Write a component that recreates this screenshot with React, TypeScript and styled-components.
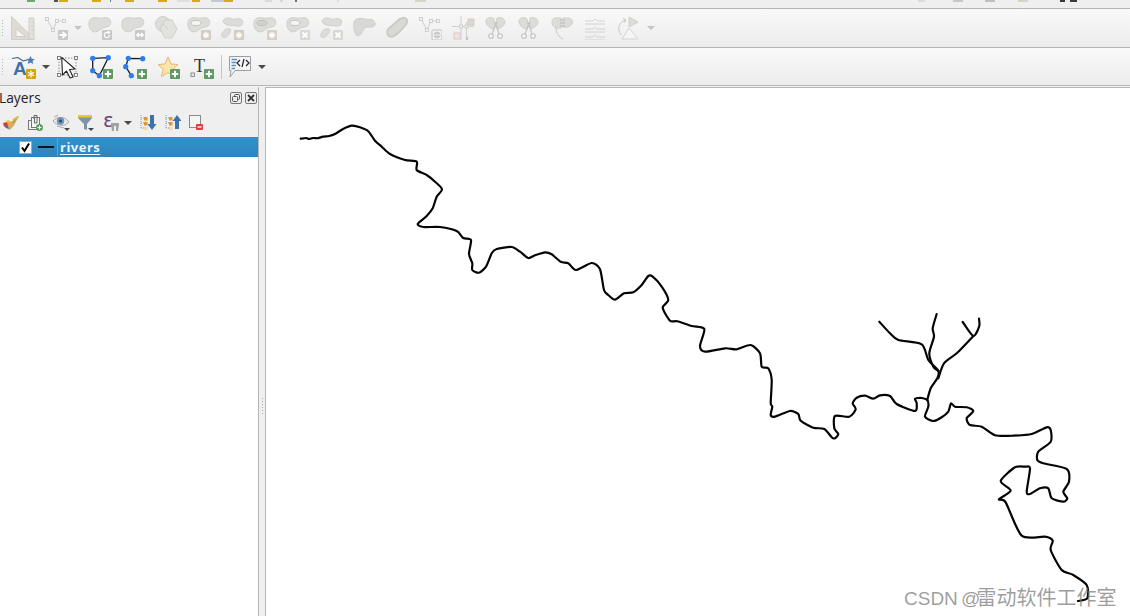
import React from "react";
import styled, { createGlobalStyle } from "styled-components";

const Global = createGlobalStyle`
  html, body { margin: 0; padding: 0; height: 100%; overflow: hidden; background: #efefef; }
  #root { height: 100%; }
  * { box-sizing: border-box; }
`;

const Page = styled.div`
  position: relative;
  width: 1130px;
  height: 616px;
  display: flex;
  flex-direction: column;
  overflow: hidden;
  font-family: "Open Sans", "Noto Sans", sans-serif;
  background: #efefef;
`;

const TopStrip = styled.div`
  height: 9px;
  flex: none;
  display: flex;
  align-items: flex-start;
  background: #efefef;
  border-bottom: 1px solid #b5b5b5;
`;

const Sliver = styled.span<{ $gap: number; $w: number; $c: string }>`
  flex: none;
  height: 2px;
  margin-left: ${(p) => p.$gap}px;
  width: ${(p) => p.$w}px;
  background: ${(p) => p.$c};
`;

const Toolbar = styled.div<{ $h: number }>`
  height: ${(p) => p.$h}px;
  flex: none;
  display: flex;
  align-items: center;
  background: linear-gradient(#f9f9f9, #ececec);
  border-bottom: 1px solid #b5b5b5;
`;

const Grip = styled.span`
  flex: none;
  width: 1px;
  height: 16px;
  margin: 0 3.5px 0 2px;
  background: repeating-linear-gradient(#b9b9b9 0 1px, transparent 1px 3px);
`;

const ToolCell = styled.span<{ $w: number }>`
  flex: none;
  width: ${(p) => p.$w}px;
  display: flex;
  align-items: center;
  justify-content: center;
  svg {
    flex: none;
  }
`;

const Caret = styled.span<{ $off?: boolean; $w?: number }>`
  flex: none;
  width: ${(p) => p.$w ?? 11}px;
  display: flex;
  justify-content: center;
  &::before {
    content: "";
    border-left: 4px solid transparent;
    border-right: 4px solid transparent;
    border-top: 4px solid ${(p) => (p.$off ? "#c4c4c4" : "#4a4a4a")};
  }
`;

const ToolSep = styled.span`
  flex: none;
  width: 1px;
  height: 24px;
  margin: 0 2.5px 0 2px;
  background: #c6c6c6;
`;

const Gap = styled.span<{ $w: number }>`
  flex: none;
  width: ${(p) => p.$w}px;
`;

const Band = styled.div`
  height: 1px;
  flex: none;
  background: #f4f4f4;
`;

const Main = styled.div`
  flex: 1;
  min-height: 0;
  display: flex;
`;

const LayersPanel = styled.section`
  width: 258px;
  flex: none;
  display: flex;
  flex-direction: column;
  background: #efefef;
`;

const PanelHead = styled.header`
  height: 21px;
  flex: none;
  display: flex;
  align-items: center;
  gap: 3px;
  padding-right: 1px;
`;

const PanelTitle = styled.h2`
  flex: 1;
  margin: 0 0 0 -1px;
  font-size: 13.8px;
  font-weight: 400;
  color: #222;
`;

const PanelTools = styled.div`
  height: 29px;
  flex: none;
  display: flex;
  align-items: center;
`;

const Tree = styled.div`
  flex: 1;
  background: #fff;
`;

const LayerRow = styled.div`
  height: 20px;
  display: flex;
  align-items: center;
  padding-left: 19px;
  background: linear-gradient(#3291ca, #2c85bf);
`;

const Check = styled.span`
  flex: none;
  width: 13px;
  height: 13px;
  display: flex;
  align-items: center;
  justify-content: center;
  background: #fff;
  border: 1px solid #a8a8a8;
`;

const Swatch = styled.span`
  flex: none;
  width: 16px;
  height: 2px;
  margin: 0 3px 0 6px;
  background: #10151a;
`;

const LayerName = styled.span`
  padding: 0 0 0 2px;
  border-left: 1px solid #5aa6d6;
  font-size: 13px;
  line-height: 18px;
  font-weight: 700;
  letter-spacing: 0.5px;
  color: #eaf4fb;
  text-decoration: underline;
  text-underline-offset: 2px;
`;

const Splitter = styled.div`
  width: 8px;
  flex: none;
  display: flex;
  justify-content: center;
  padding-top: 311px;
  background: #efefef;
  border-left: 1px solid #b5b5b5;
  border-right: 1px solid #b5b5b5;
`;

const SplitDots = styled.span`
  width: 1px;
  height: 16px;
  margin-left: 1px;
  background: repeating-linear-gradient(#a9a9a9 0 1px, transparent 1px 3px);
`;

const MapCanvas = styled.main`
  flex: 1;
  min-width: 0;
  background: #fff;
  border-top: 1px solid #b5b5b5;
`;

const MapSvg = styled.svg`
  display: block;
  width: 100%;
  height: 100%;
`;

const Watermark = styled.div`
  position: absolute;
  left: 904px;
  top: 586px;
  font-family: "Liberation Sans", "Noto Sans CJK SC", sans-serif;
  font-size: 19px;
  line-height: 24px;
  word-spacing: -2px;
  white-space: nowrap;
  color: rgba(120, 120, 120, 0.72);
`;

const WatermarkCjk = styled.span`
  margin-left: -4px;
  font-size: 20px;
`;

const Ico = ({ s = 24, children }: { s?: number; children: React.ReactNode }) => (
  <svg width={s} height={s} viewBox={`0 0 ${s} ${s}`} fill="none">
    {children}
  </svg>
);

const OFF = { fill: "#dcdcd9", stroke: "#cfcfcb" };
const BLOB = "M1 7C1 2 6 1 10 2C14 3 17 1 20 2C24 4 23 9 21 10C18 12 15 11 13 13C10 16 5 17 3 14C1 12 1 10 1 7Z";

const Blob = () => <path d={BLOB} fill={OFF.fill} stroke={OFF.stroke} />;
const Hole = () => <ellipse cx="9" cy="7" rx="5" ry="2.6" fill="#f5f5f5" stroke="#c4c4c0" />;
const TwoBlobs = () => (
  <>
    <path d="M3 5C4 2 9 1 12 3C15 4 19 1 22 4C24 7 22 11 17 10C13 9 5 11 3 5Z" fill={OFF.fill} stroke={OFF.stroke} />
    <path d="M2 18C3 14 7 12 10 13C12 14 9 19 6 21C3 22 1 21 2 18Z" fill={OFF.fill} stroke={OFF.stroke} />
  </>
);

const Badge = ({ kind, fill = "#c8c8c6" }: { kind: string; fill?: string }) => (
  <g>
    <rect x="14" y="14" width="10" height="10" rx="1" fill={fill} />
    {kind === "plus" && <path d="M19 15.8V22.2M15.8 19H22.2" stroke="#fff" strokeWidth="2" />}
    {kind === "x" && <path d="M16.5 16.5L21.5 21.5M21.5 16.5L16.5 21.5" stroke="#fff" strokeWidth="1.8" />}
    {kind === "arrow" && <path d="M15.5 19H20M18.5 16L22 19L18.5 22" stroke="#fff" strokeWidth="1.8" />}
    {kind === "swap" && <path d="M16 19H22M17.8 17L15.8 19L17.8 21M20.2 17L22.2 19L20.2 21" stroke="#fff" strokeWidth="1.4" />}
    {kind === "rotate" && <path d="M21.5 19A2.6 2.6 0 1 1 19 16.4H21M20 15L21.6 16.4L20 17.8" stroke="#fff" strokeWidth="1.2" />}
    {kind === "gear" && (
      <>
        <circle cx="19" cy="19" r="2" stroke="#fff" strokeWidth="1.2" />
        <path d="M19 15.6V22.4M15.6 19H22.4M16.6 16.6L21.4 21.4M21.4 16.6L16.6 21.4" stroke="#fff" strokeWidth="0.8" />
      </>
    )}
    {kind === "star" && (
      <path d="M19 15.6V22.4M16 17.3L22 20.7M22 17.3L16 20.7" stroke="#fff" strokeWidth="1.2" />
    )}
  </g>
);

const VNodes = () => (
  <g>
    <path d="M3 3L9 14L13 5H20" stroke="#d4d4d0" strokeWidth="1.2" />
    {[[3, 3], [9, 14], [13, 5], [20, 5]].map(([x, y]) => (
      <rect key={`${x}${y}`} x={x - 1.5} y={y - 1.5} width="3" height="3" fill="#f4f4f4" stroke="#c6c6c2" strokeWidth="0.8" />
    ))}
  </g>
);

const Leaves = () => (
  <g>
    <path d="M2 5C2 2 6 1 9 2C11 3 11 9 10 13C6 13 2 9 2 5Z" fill={OFF.fill} stroke={OFF.stroke} />
    <path d="M13 2C16 1 21 2 21 6C21 9 17 12 14 13C13 9 12 5 13 2Z" fill={OFF.fill} stroke={OFF.stroke} />
  </g>
);

const Scissors = () => (
  <g stroke="#c4c0c0" strokeWidth="1.1">
    <path d="M13 6L8 18M11 6L15 18" />
    <circle cx="7" cy="20" r="2.3" fill="#f4f4f4" />
    <circle cx="16" cy="20" r="2.3" fill="#f4f4f4" />
  </g>
);

const disabledIcons: React.ReactNode[] = [
  <g key="a" stroke="#cfcdc6">
    <path d="M0.5 0.5L23.5 23.5H0.5Z" fill="#dedbd5" />
    <path d="M5 12.5L14.5 20.5H5Z" fill="#f4f4f4" />
    <path d="M18 23V2L23 2V23Z" fill="#e4e2dc" />
    <path d="M20 6H23M20 10H23M20 14H23M20 18H23" strokeWidth="0.8" />
  </g>,
  <g key="b"><VNodes /><Badge kind="arrow" /></g>,
  <g key="c"><Blob /><Badge kind="rotate" /></g>,
  <g key="d"><Blob /><Badge kind="swap" /></g>,
  <g key="e">
    <circle cx="9" cy="8" r="7.5" fill={OFF.fill} stroke={OFF.stroke} />
    <path d="M11 4H18L23 13L18 22H11L6 13Z" fill="#e2e2df" stroke={OFF.stroke} />
    <path d="M9 8L14 13" stroke="#c2c2be" strokeDasharray="1.5 1" />
  </g>,
  <g key="f"><Blob /><Hole /><Badge kind="gear" fill="#d0ccc4" /></g>,
  <g key="g"><TwoBlobs /><Badge kind="gear" fill="#d0ccc4" /></g>,
  <g key="h"><Blob /><ellipse cx="9" cy="7" rx="5" ry="2.6" fill="#d2d2ce" stroke="#c0c0bc" /><Badge kind="gear" fill="#d4d0c8" /></g>,
  <g key="i"><Blob /><Hole /><Badge kind="x" fill="#dad8d4" /></g>,
  <g key="j"><TwoBlobs /><Badge kind="x" fill="#dad8d4" /></g>,
  <g key="k">
    <path d="M2 6C3 2 9 2 13 3C16 4 22 2 23 7C24 12 18 11 15 11C11 11 10 20 6 20C3 20 1 12 2 6Z" fill="#d8d9d4" stroke={OFF.stroke} />
  </g>,
  <g key="l">
    <path d="M2 16C2 12 7 10 10 7C13 4 16 1 20 2C23 3 23 7 20 10C17 13 13 18 9 20C5 22 2 20 2 16Z" fill="#d8d9d4" stroke="#c8c9c2" strokeWidth="1.6" />
  </g>,
  <g key="m">
    <VNodes />
    <rect x="14" y="14" width="10" height="10" rx="1" fill="#f4f4f4" stroke="#c0c0c0" />
    <circle cx="19" cy="19" r="3" fill="#c8c8c8" stroke="#c8c8c8" />
    <path d="M16 19H22" stroke="#f4f4f4" />
  </g>,
  <g key="n" stroke="#cfcfcb">
    <path d="M10 0V24M15.5 6V24M1 10.5H23" />
    <rect x="8.5" y="9" width="3" height="3" fill="#f4f4f4" />
    <rect x="14" y="9" width="3" height="3" fill="#f4f4f4" />
    <rect x="15" y="21" width="2" height="3" fill="#c0c0c0" stroke="none" />
    <rect x="17" y="3" width="6" height="6" fill="#dcd8c8" />
    <rect x="3" y="17" width="6" height="6" fill="#efe4e4" stroke="#dcc8c8" />
  </g>,
  <g key="o"><Leaves /><Scissors /></g>,
  <g key="p"><Leaves /><Scissors /></g>,
  <g key="q">
    <path d="M2 6C2 3 5 1 9 2L11 2V12C7 13 2 11 2 6Z" fill={OFF.fill} stroke={OFF.stroke} />
    <path d="M13 2H18C22 2 23 5 22 8C20 11 16 12 13 11Z" fill={OFF.fill} stroke={OFF.stroke} />
    <path d="M10 4L15 4M10 7H15M10 10H15" stroke="#b8b8b4" />
    <path d="M6 12C6 17 9 21 13 23" stroke="#c4c4c0" />
  </g>,
  <g key="r" stroke="#d2d2ce">
    {[3, 11, 19].map((y) => (
      <g key={y}>
        <path d={`M2 ${y + 2}H10C10 ${y} 14 ${y} 14 ${y + 2}H22`} />
        <path d={`M2 ${y + 5}H22`} />
      </g>
    ))}
  </g>,
  <g key="s">
    <path d="M13 1V11L22 6Z" fill="#dcdcd8" stroke="#d0d0cc" />
    <path d="M13 12L6 23H22Z" fill="#f5f5f5" stroke="#d4d4d0" />
    <path d="M10 4C4 5 0 12 5 19" stroke="#c8c8c4" />
    <path d="M7 2L10 4L8 7" stroke="#c8c8c4" />
  </g>,
];

const Dot = ({ x, y, c = "#2f7ee8" }: { x: number; y: number; c?: string }) => <circle cx={x} cy={y} r="2.6" fill={c} />;
const GREEN = "#5e9a62";

const LabelIcon = () => (
  <Ico>
    <path d="M0 3.5L6 2.5L11 6L15 5" stroke="#3d5f8c" strokeWidth="1.1" />
    <path d="M18.5 1L19.8 3.7L22.8 4L20.6 6L21.2 8.9L18.5 7.5L15.8 8.9L16.4 6L14.2 4L17.2 3.7Z" fill="#4f7cb4" />
    <text x="1" y="20" fontFamily="Liberation Sans, sans-serif" fontWeight="700" fontSize="19" fill="#3f6fa8">A</text>
    <Badge kind="star" fill="#d8a400" />
  </Ico>
);

const PointerIcon = () => (
  <Ico>
    <rect x="4" y="3" width="17" height="17" stroke="#8a8a8a" strokeDasharray="1.5 1.5" />
    {[[4, 3], [21, 3], [4, 20], [21, 20]].map(([x, y]) => (
      <rect key={`${x}${y}`} x={x - 1.5} y={y - 1.5} width="3" height="3" fill="#f4f4f4" stroke="#666" strokeWidth="0.8" />
    ))}
    <path d="M6.7 2.3L20 14L14.5 14.5L18 22L15 23L11.5 16L7.5 20Z" fill="#fff" stroke="#222" strokeWidth="1.1" strokeLinejoin="round" />
  </Ico>
);

const PolygonIcon = () => (
  <Ico>
    <path d="M3.7 3.3L19.3 2.7L10.3 20.7L3.7 15.7Z" stroke="#1c1c1c" strokeWidth="1.3" />
    <Dot x={3.7} y={3.3} />
    <Dot x={19.3} y={2.7} />
    <Dot x={3.7} y={15.7} />
    <Dot x={10.3} y={20.7} />
    <Badge kind="plus" fill={GREEN} />
  </Ico>
);

const LineIcon = () => (
  <Ico>
    <path d="M19.7 3.7L5.3 3.3L2.7 11.7L8.3 20.7" stroke="#1c1c1c" strokeWidth="1.3" />
    <Dot x={19.7} y={3.7} />
    <Dot x={5.3} y={3.3} />
    <Dot x={2.7} y={11.7} />
    <Dot x={8.3} y={20.7} />
    <Badge kind="plus" fill={GREEN} />
  </Ico>
);

const StarIcon = () => (
  <Ico>
    <path d="M12 2L15 9L22 9.5L16.8 14.2L18.5 21.5L12 17.5L5.5 21.5L7.2 14.2L2 9.5L9 9Z" fill="#fde5a6" stroke="#e6b676" strokeLinejoin="round" />
    <Badge kind="plus" fill={GREEN} />
  </Ico>
);

const TextIcon = () => (
  <Ico>
    <text x="4" y="17" fontFamily="Liberation Serif, serif" fontSize="18" fill="#333">T</text>
    <rect x="1" y="18" width="3.4" height="3.4" fill="#efefef" stroke="#8a8a8a" />
    <Badge kind="plus" fill={GREEN} />
  </Ico>
);

const BubbleIcon = () => (
  <Ico>
    <path d="M2.5 1.5H23.5V15.5H8L3 22L4 15.5H2.5Z" fill="#f6f6f6" stroke="#9a9ea2" />
    <path d="M4.5 4.5H10M4.5 7.5H9M4.5 10.5H9M4.5 13.5H8" stroke="#5c8fc8" strokeWidth="1.4" />
    <path d="M13 5L10 8L13 11M19 5L22 8L19 11M17 4L15 12" stroke="#222" strokeWidth="1.2" />
  </Ico>
);

const FloatBtn = () => (
  <Ico s={12}>
    <rect x="0.5" y="0.5" width="11" height="11" rx="1.5" fill="#efefef" stroke="#777" />
    <rect x="4.5" y="2.5" width="5" height="5" rx="1" stroke="#555" />
    <rect x="2.5" y="4.5" width="5" height="5" rx="1" fill="#efefef" stroke="#555" />
  </Ico>
);

const CloseBtn = () => (
  <Ico s={12}>
    <rect x="0.5" y="0.5" width="11" height="11" rx="1.5" fill="#efefef" stroke="#777" />
    <path d="M3 3L9 9M9 3L3 9" stroke="#333" strokeWidth="1.8" />
  </Ico>
);

const PaintIcon = () => (
  <Ico s={18}>
    <path d="M17 2L9 8L12 11Z" fill="#c8a050" />
    <path d="M16.5 2.5L11 6" stroke="#e0b840" strokeWidth="2" />
    <path d="M9 7L12.5 11L8 16L3 13L1 11Z" fill="#d8ad60" />
    <path d="M1 9L5 8L6 12L2 12Z" fill="#d83a3a" />
    <path d="M2 12L6 12L7 15L4 14Z" fill="#4a6ea8" />
    <path d="M4 7L7 6L8 9L5 9Z" fill="#e8c030" />
  </Ico>
);

const AddGroupIcon = () => (
  <Ico s={18}>
    <rect x="2.5" y="6.5" width="10" height="9" fill="#f4f4f4" stroke="#777" />
    <rect x="5.5" y="3.5" width="8" height="10" fill="#f4f4f4" stroke="#777" />
    <path d="M8 5V1.5H11V9H8.5V4" stroke="#666" />
    <circle cx="13.5" cy="13.5" r="3.5" fill="#5e9a62" />
    <path d="M13.5 11.5V15.5M11.5 13.5H15.5" stroke="#fff" />
  </Ico>
);

const EyeIcon = () => (
  <Ico s={18}>
    <path d="M1 7C5 2 13 2 17 8C13 13 5 12 1 7Z" fill="#e8e8e8" stroke="#aaa" />
    <circle cx="8.5" cy="7" r="3.7" fill="#6f95b8" />
    <circle cx="8.5" cy="7" r="1.5" fill="#2e4a64" />
    <path d="M2 3L6 1M5 12L12 14" stroke="#aaa" />
    <path d="M12 14H18L15 17Z" fill="#444" />
  </Ico>
);

const FunnelIcon = () => (
  <Ico s={18}>
    <path d="M1 1H15V4L10 10V16L7 15V10L1 4Z" fill="#7d93a8" />
    <path d="M1 1H15V3.5H1Z" fill="#e8c92e" />
    <path d="M11 14H17L14 17Z" fill="#444" />
  </Ico>
);

const ExprIcon = () => (
  <Ico s={28}>
    <text x="6" y="18" fontFamily="DejaVu Sans, sans-serif" fontSize="20" fill="#6b4a78">ε</text>
    <path d="M14 14H22V16L21 22H19V17H17V22H15L14 16Z" fill="#a2a2a2" />
  </Ico>
);

const TreeArrow = ({ up }: { up?: boolean }) => (
  <Ico s={18}>
    <path d="M2 1V15M2 4H6M2 9H6M2 14H6" stroke="#999" strokeDasharray="1 1" />
    <rect x="5" y="3" width="3.5" height="3.5" fill="#e8962a" />
    <rect x="5" y="8" width="3.5" height="3.5" fill="#e8962a" />
    <rect x="5" y="13" width="3.5" height="3" fill="#f0d8b0" />
    <path
      d={up ? "M13 1L17.5 7H15V15H11V7H8.5Z" : "M11 1H15V10H17.5L13 16L8.5 10H11Z"}
      fill="#3d73ad"
    />
  </Ico>
);

const RemoveIcon = () => (
  <Ico s={18}>
    <rect x="1.5" y="1.5" width="11" height="12" stroke="#8a8a8a" fill="#f4f4f4" />
    <rect x="8" y="10" width="7" height="6" rx="1" fill="#e23b45" />
    <path d="M9.5 13H13.5" stroke="#fff" strokeWidth="1.4" />
  </Ico>
);

const slivers: [number, number, string][] = [
  [27, 8, "#6fa574"], [19, 4, "#55504a"], [1, 9, "#d8ab10"], [24, 9, "#d8ab10"], [9, 1, "#5c86b0"],
  [14, 9, "#d8ab10"], [24, 9, "#d8ab10"], [10, 13, "#dedede"], [2, 8, "#d8ab10"], [11, 13, "#c2c9d4"],
  [0, 9, "#d8ab10"], [32, 7, "#dadada"], [8, 3, "#d6d6d6"], [12, 2, "#77706a"], [40, 2, "#dcdcdc"],
  [76, 11, "#d6d4c8"], [492, 7, "#dcdcdc"], [28, 10, "#c8c8c8"], [22, 10, "#c0c0c0"], [23, 10, "#d6d4c8"],
  [32, 5, "#3a3a3a"], [5, 7, "#3a3a3a"],
];

type P = [number, number];

const mainRiver: P[] = [
  [300.7,138.7],[306,138],[309,139],[313,138],[318,138.2],[323,136.7],[329,136],[335,134],[343,129],[351.7,125.7],[360,127.3],[368,131],[375,140.7],[381.7,146.7],
  [390,154],[405,160],[416.7,161.7],[416.7,170],[426.7,175],[435,181.7],[442,189.3],[436.7,196.7],[432.7,208.3],[426.7,216],
  [417.7,224],[423.3,227],[440,227],[456.7,231],[463.3,238],[471,240],[469,254],[472.3,263.3],[472.3,270],[479,272.7],
  [486,266.7],[491.7,253.3],[496.7,249],[511.7,247],[520,251.7],[528.3,258],[535,255.3],[545,252.3],[551.7,254.3],[560.7,261.7],
  [568.3,263.3],[576,270],[591.7,263],[600,269.3],[604,290],[608.3,295],[615,299.7],[624,293.3],[633.3,292.3],[641.7,285],
  [648.3,276],[652.7,276.7],[661.7,286.7],[668.3,300],[662.7,307.7],[670,320.7],[677.3,321.3],[691.7,326],[704.3,329],[700,346],
  [705,351.7],[725,348.3],[736.7,349.3],[750.7,345],[760,353.3],[761.7,366.7],[768.3,368.3],[771.7,380],[770.7,403.3],[772.3,406.7],
  [770.7,415],[775,416.7],[790,411],[798.3,414],[800.7,420.7],[813.3,427.7],[824.3,429],[831.7,437.3],[835,438.3],[838.3,434],
  [834.3,428.3],[835,416],[849.3,416.7],[855.7,409.3],[852.7,403.3],[856.7,397.7],[865,395.7],[873.3,398.7],[880,395.3],[890,396],
  [896.7,404],[915,411],[916.7,403.3],[915,398.7],[921.7,398],[927.3,400],[928.3,406.7],[925,416.7],[933.3,421],[941.7,417.3],
  [948.3,411.7],[951,403.3],[955,406.7],[966.7,407.3],[973.3,411],[966.7,418.3],[970,425],[981.7,426.7],[995,435.3],[1013.3,435.7],
  [1031.7,434],[1046.7,427.3],[1050.7,430],[1050.7,441.7],[1038.3,451.7],[1037.3,460],[1043.3,463.3],[1066.7,469],[1069,481.7],[1063.3,491.7],
  [1067.3,498.3],[1063.3,501.7],[1051.7,498.3],[1048.3,488.3],[1040,488.3],[1030,494],[1026.7,491.7],[1030,468.3],[1025,466.7],[1015,467.3],
  [1000.7,481],[1010.7,490.7],[999,499.3],[1005.7,502.3],[1021.7,535.7],[1045,536.7],[1052.7,540.7],[1050.7,550],[1061.7,570],[1073.3,575],
  [1086.7,585],[1087.3,598.3],[1078,601],
];

const tributaries: P[][] = [
  [[879.3,321.7],[890,333.3],[898.3,340],[921.7,344.3],[928.3,360],[938.3,370.7],[937.3,378.3],[930.7,388.3],[927.3,400]],
  [[936.7,314],[932.7,328.3],[934,336.7],[929.3,353.3],[933.3,366.7],[938.3,370.7]],
  [[962.7,322],[973.3,336],[979.3,326],[979,318.7]],
  [[973.3,336],[956.7,353.3],[944,363.3],[938.3,378.3]],
];

const smooth = (pts: P[]) => {
  let d = `M${pts[0][0]} ${pts[0][1]}`;
  for (let i = 0; i < pts.length - 1; i++) {
    const p0 = pts[Math.max(i - 1, 0)];
    const p1 = pts[i];
    const p2 = pts[i + 1];
    const p3 = pts[Math.min(i + 2, pts.length - 1)];
    const c1x = p1[0] + (p2[0] - p0[0]) / 8;
    const c1y = p1[1] + (p2[1] - p0[1]) / 8;
    const c2x = p2[0] - (p3[0] - p1[0]) / 8;
    const c2y = p2[1] - (p3[1] - p1[1]) / 8;
    d += `C${c1x.toFixed(1)} ${c1y.toFixed(1)} ${c2x.toFixed(1)} ${c2y.toFixed(1)} ${p2[0]} ${p2[1]}`;
  }
  return d;
};

export default function App() {
  return (
    <Page>
      <Global />
      <TopStrip>
        {slivers.map(([g, w, c], i) => (
          <Sliver key={i} $gap={g} $w={w} $c={c} />
        ))}
      </TopStrip>
      <Toolbar $h={39}>
        <Grip />
        {disabledIcons.map((icon, i) => (
          <React.Fragment key={i}>
            <ToolCell $w={33}><Ico>{icon}</Ico></ToolCell>
            {i === 1 && <Caret $off />}
          </React.Fragment>
        ))}
        <Caret $off $w={12} />
      </Toolbar>
      <Toolbar $h={38}>
        <Grip />
        <Gap $w={1} />
        <ToolCell $w={33}><LabelIcon /></ToolCell>
        <Caret $w={10} />
        <ToolCell $w={33.5}><PointerIcon /></ToolCell>
        <ToolCell $w={34}><PolygonIcon /></ToolCell>
        <ToolCell $w={33.5}><LineIcon /></ToolCell>
        <ToolCell $w={33}><StarIcon /></ToolCell>
        <ToolCell $w={34}><TextIcon /></ToolCell>
        <ToolSep />
        <ToolCell $w={30}><BubbleIcon /></ToolCell>
        <Caret $w={16} />
      </Toolbar>
      <Band />
      <Main>
        <LayersPanel>
          <PanelHead>
            <PanelTitle>Layers</PanelTitle>
            <FloatBtn />
            <CloseBtn />
          </PanelHead>
          <PanelTools>
            <ToolCell $w={21}><PaintIcon /></ToolCell>
            <ToolCell $w={28}><AddGroupIcon /></ToolCell>
            <ToolCell $w={24}><EyeIcon /></ToolCell>
            <ToolCell $w={26}><FunnelIcon /></ToolCell>
            <ToolCell $w={24}><ExprIcon /></ToolCell>
            <Caret $w={10} />
            <Gap $w={3} />
            <ToolCell $w={24}><TreeArrow /></ToolCell>
            <ToolCell $w={25}><TreeArrow up /></ToolCell>
            <ToolCell $w={24}><RemoveIcon /></ToolCell>
          </PanelTools>
          <Tree>
            <LayerRow>
              <Check>
                <svg width="11" height="11" viewBox="0 0 11 11" fill="none">
                  <path d="M2 5.5L4.5 9L9 1.5" stroke="#000" strokeWidth="2" />
                </svg>
              </Check>
              <Swatch />
              <LayerName>rivers</LayerName>
            </LayerRow>
          </Tree>
        </LayersPanel>
        <Splitter><SplitDots /></Splitter>
        <MapCanvas>
          <MapSvg viewBox="266 88 864 528" preserveAspectRatio="xMinYMin slice">
            <g fill="none" stroke="#050505" strokeWidth="2.2" strokeLinejoin="round" strokeLinecap="round">
              <path d={smooth(mainRiver)} />
              {tributaries.map((t, i) => (
                <path key={i} d={smooth(t)} />
              ))}
            </g>
          </MapSvg>
        </MapCanvas>
      </Main>
      <Watermark>
        CSDN @<WatermarkCjk>雷动软件工作室</WatermarkCjk>
      </Watermark>
    </Page>
  );
}
